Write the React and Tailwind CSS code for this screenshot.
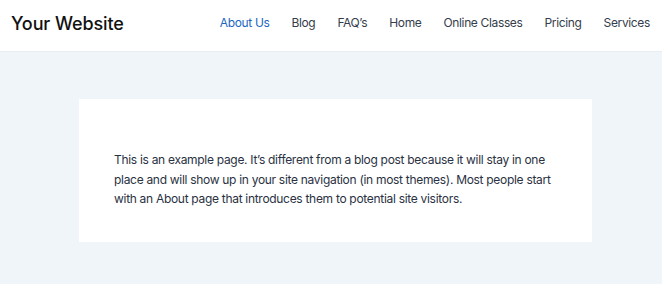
export default function App() {
  const nav = ["About Us", "Blog", "FAQ’s", "Home", "Online Classes", "Pricing", "Services"];
  return (
    <div className="min-h-[284px] w-[662px] bg-[#f0f5fa] font-['Inter',sans-serif] overflow-hidden">
      <header className="h-[52px] bg-white border-b border-[#e9eef4] flex items-center justify-between pl-[11px] pr-[12px] pb-[5px]">
        <div className="text-[18px] font-medium text-[#111] tracking-[-0.1px]">Your Website</div>
        <nav className="flex items-center gap-[22px] text-[12px] tracking-[-0.35px]">
          {nav.map((n, i) => (
            <span key={n} className={i === 0 ? "text-[#1b66c2]" : "text-[#353c4b]"}>{n}</span>
          ))}
        </nav>
      </header>
      <main className="pt-[47px] pl-[79px]">
        <div className="w-[513px] h-[143px] bg-white pt-[51px] px-[35px]">
          <p className="text-[12px] leading-[19.5px] tracking-[-0.3px] text-[#2a3142]">
            This is an example page. It’s different from a blog post because it will stay in one place and will show up in your site navigation (in most themes). Most people start with an About page that introduces them to potential site visitors.
          </p>
        </div>
      </main>
    </div>
  );
}
